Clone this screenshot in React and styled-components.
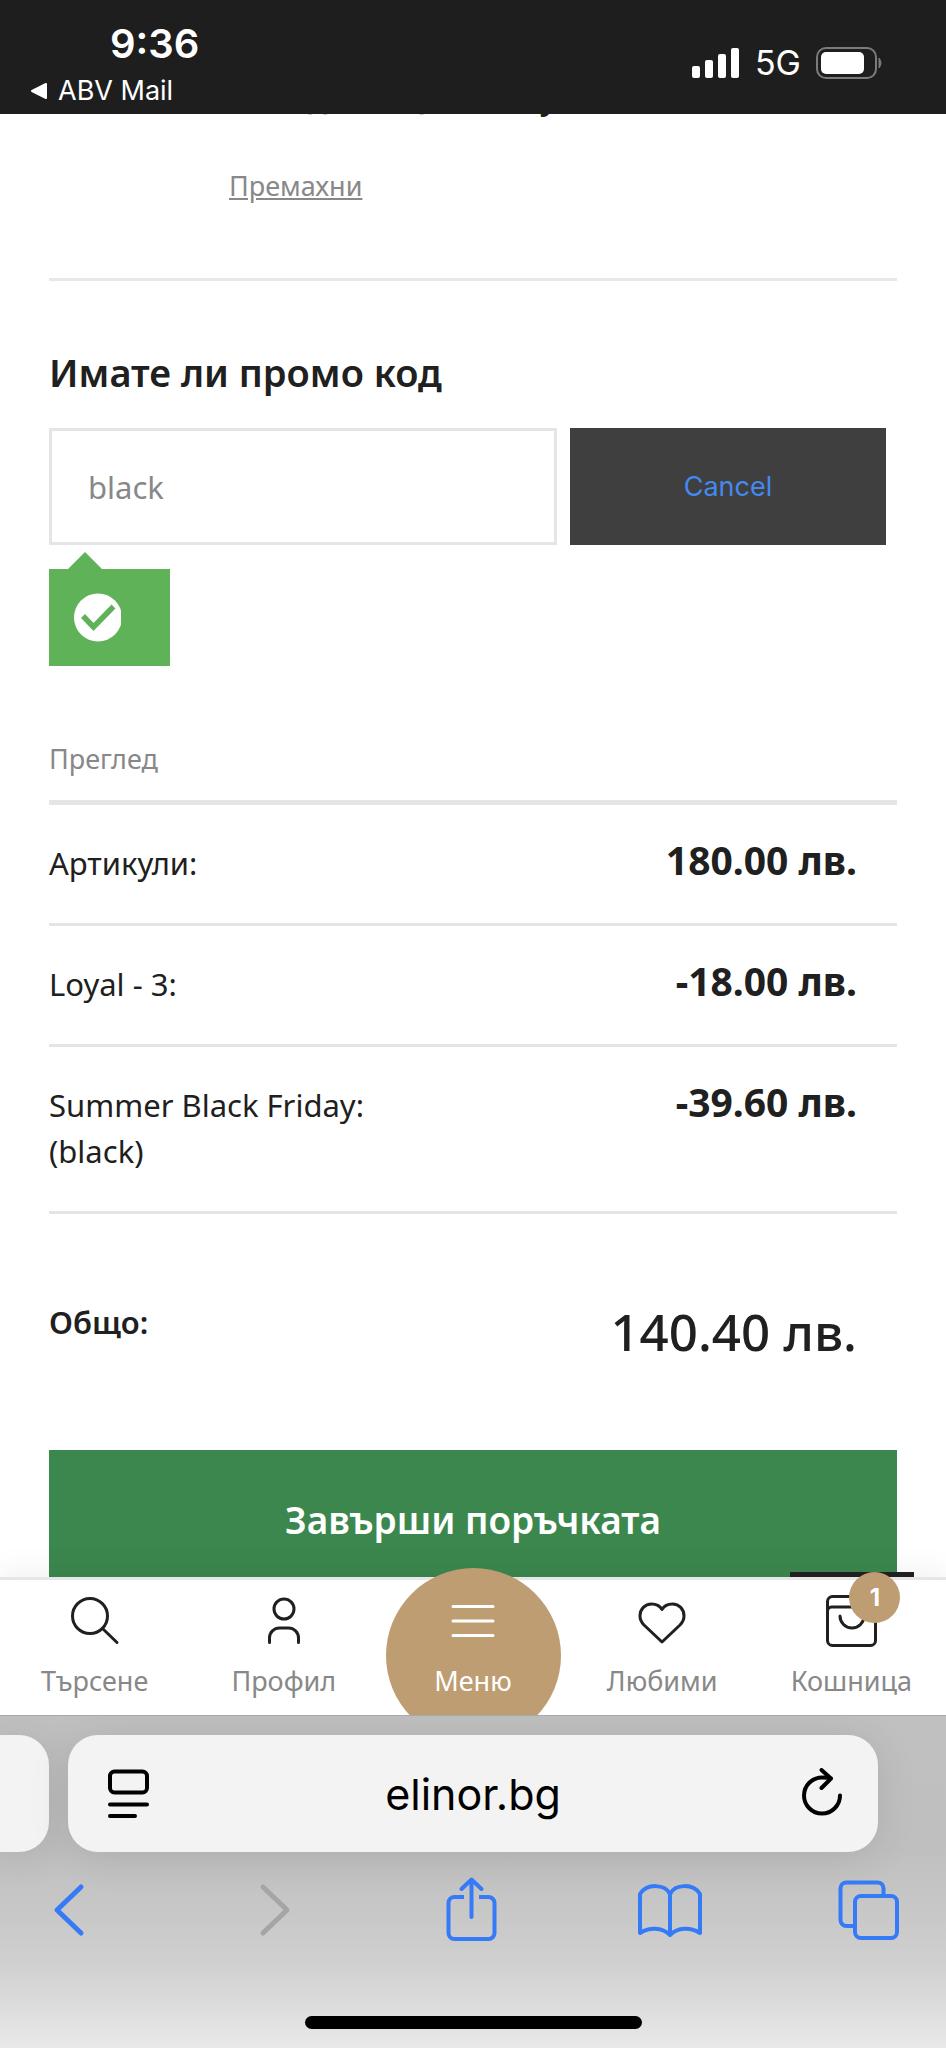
import React, { useState } from 'react';
import styled, { createGlobalStyle } from 'styled-components';

const summary = [
  { id: 1, label: 'Артикули:', amount: '180.00 лв.' },
  { id: 2, label: 'Loyal - 3:', amount: '-18.00 лв.' },
  { id: 3, label: 'Summer Black Friday: (black)', amount: '-39.60 лв.' },
];

function App() {
  const [promo, setPromo] = useState('black');

  return (
    <Page>
      <GlobalStyle />

      <StatusBar>
        <StatusLeft>
          <Time>9:36</Time>
          <BackToApp href="#">
            <svg width="18" height="18" viewBox="0 0 18 18">
              <path d="M2 9L16 2V16Z" fill="#fff" stroke="#fff" strokeWidth="2" strokeLinejoin="round" />
            </svg>
            ABV Mail
          </BackToApp>
        </StatusLeft>
        <StatusRight>
          <svg width="48" height="32" viewBox="0 0 48 32" fill="#fff">
            <rect x="0" y="19" width="8" height="12" rx="2" />
            <rect x="13" y="13" width="8" height="18" rx="2" />
            <rect x="26" y="7" width="8" height="24" rx="2" />
            <rect x="39" y="1" width="8" height="30" rx="2" />
          </svg>
          <Network>5G</Network>
          <svg width="68" height="34" viewBox="0 0 68 34">
            <rect x="1" y="2" width="59" height="30" rx="9" fill="none" stroke="#7b7b7b" strokeWidth="2" />
            <rect x="5" y="6" width="43" height="22" rx="5" fill="#fff" />
            <path d="M63 12q4 5 0 10z" fill="#7b7b7b" stroke="#7b7b7b" />
          </svg>
        </StatusRight>
      </StatusBar>

      <Main>
        <CartItem>
          {/* last line of the product name, scrolled under the status bar */}
          <NameTail>
            <span>д</span>
            <span>ц</span>
            <span>у</span>
          </NameTail>
          <RemoveLink href="#">Премахни</RemoveLink>
        </CartItem>

        <PromoLabel htmlFor="promo">Имате ли промо код</PromoLabel>
        <PromoForm onSubmit={(e) => e.preventDefault()}>
          <PromoInput id="promo" type="text" value={promo} onChange={(e) => setPromo(e.target.value)} />
          <CancelButton type="button" onClick={() => setPromo('')}>Cancel</CancelButton>
        </PromoForm>
        <PromoResult>
          <svg width="47" height="49" viewBox="0 0 47 49">
            <circle cx="24" cy="24.5" r="24" fill="#fff" />
            <path d="M9 23L19.500 34L39.500 13.500" fill="none" stroke="#60b258" strokeWidth="5.500" />
          </svg>
        </PromoResult>

        <SummaryTitle>Преглед</SummaryTitle>
        <Summary>
          {summary.map(row => (
            <Row key={row.id}>
              <Label>{row.label}</Label>
              <Amount>{row.amount}</Amount>
            </Row>
          ))}
          <TotalRow>
            <Label $bold>Общо:</Label>
            <Amount $total>140.40 лв.</Amount>
          </TotalRow>
        </Summary>

        <OrderButton type="button">Завърши поръчката</OrderButton>
      </Main>

      <TabBar>
        <HiddenTooltip />
        <Tab href="#">
          <TabIcon>
            <circle cx="21" cy="20" r="17.500" />
            <path d="M33.500 32.500L48 46.500" />
          </TabIcon>
          <TabText>Търсене</TabText>
        </Tab>
        <Tab href="#">
          <TabIcon>
            <circle cx="26" cy="13" r="10" />
            <path d="M11.500 46.500V42a10 10 0 0 1 10-10h9a10 10 0 0 1 10 10v4.500" />
          </TabIcon>
          <TabText>Профил</TabText>
        </Tab>
        <Tab href="#" $active>
          <TabIcon $active>
            <path d="M6 10.500H46M6 25H46M6 39.500H46" />
          </TabIcon>
          <TabText>Меню</TabText>
        </Tab>
        <Tab href="#">
          <TabIcon>
            <path d="M26 46L8 29C5.500 26.500 4 23.500 4 20C4 13 9 8 15.500 8C20 8 24 10 26 13.500C28 10 32 8 36.500 8C43 8 48 13 48 20C48 23.500 46.500 26.500 44 29Z" />
          </TabIcon>
          <TabText>Любими</TabText>
        </Tab>
        <Tab href="#">
          <TabIcon>
            <rect x="2.500" y="0.500" width="48" height="49" rx="5" />
            <path d="M2.500 15a4 4 0 0 1 4-4h40a4 4 0 0 1 4 4M15 20a12 12 0 0 0 24 0" />
          </TabIcon>
          <TabText>Кошница</TabText>
          <Badge>1</Badge>
        </Tab>
      </TabBar>

      <BrowserBar>
        <AddressRow>
          <PreviousTab />
          <Address>
            <IconButton type="button" aria-label="Изглед">
              <svg width="48" height="52" viewBox="0 0 48 52" fill="none" stroke="#000" strokeWidth="4" strokeLinecap="round">
                <rect x="6" y="3.500" width="37" height="21" rx="4.500" />
                <path d="M6 36.500H43M6 48H31" />
              </svg>
            </IconButton>
            <Url>elinor.bg</Url>
            <IconButton type="button" aria-label="Презареди">
              <svg width="48" height="52" viewBox="0 0 48 52" fill="none" stroke="#000" strokeWidth="4" strokeLinecap="round" strokeLinejoin="round">
                <path d="M46 27.500A18 18 0 1 1 28 9.500Q33 9.500 37 10.500M27.500 2L37 10.500L27.500 20" />
              </svg>
            </IconButton>
          </Address>
        </AddressRow>

        <Toolbar>
          <IconButton type="button" aria-label="Назад">
            <ToolIcon $thick><path d="M45 11L21 34L45 57" /></ToolIcon>
          </IconButton>
          <IconButton type="button" aria-label="Напред" disabled>
            <ToolIcon $thick $disabled><path d="M27 11L51 34L27 57" /></ToolIcon>
          </IconButton>
          <IconButton type="button" aria-label="Сподели">
            <ToolIcon>
              <path d="M27 21H17.500a6 6 0 0 0-6 6V57a6 6 0 0 0 6 6H51.500a6 6 0 0 0 6-6V27a6 6 0 0 0-6-6H42" strokeLinecap="butt" />
              <path d="M34.500 4V41M24.500 13L34.500 3.500L44.500 13" />
            </ToolIcon>
          </IconButton>
          <IconButton type="button" aria-label="Отметки">
            <ToolIcon>
              <path d="M33 18C28 8 10 7 3 18V57C12 51 25 51 33 59C41 51 54 51 63 57V18C56 7 38 8 33 18V59" />
            </ToolIcon>
          </IconButton>
          <IconButton type="button" aria-label="Раздели">
            <ToolIcon>
              <path d="M17 50H9.500a6 6 0 0 1-6-6V12.500a6 6 0 0 1 6-6h31a6 6 0 0 1 6 6V20" strokeLinecap="butt" />
              <rect x="18" y="20" width="42" height="42" rx="6" />
            </ToolIcon>
          </IconButton>
        </Toolbar>
        <HomeIndicator />
      </BrowserBar>
    </Page>
  );
}

export default App;


const GlobalStyle = createGlobalStyle`
  * {
    box-sizing: border-box;
  }
  body {
    margin: 0;
    background: #fff;
    color: #202020;
    font-family: "Noto Sans", sans-serif;
  }
  button {
    border: 0;
    padding: 0;
    background: none;
    font-family: inherit;
  }
  svg {
    display: block;
    flex-shrink: 0;
  }
`;

const Page = styled.div`
  display: flex;
  flex-direction: column;
  height: 100vh;
`;

/* status bar */
const StatusBar = styled.header`
  display: flex;
  justify-content: space-between;
  flex-shrink: 0;
  height: 114px;
  padding: 20px 62px 0 30px;
  background: #1e1e1e;
  color: #fff;
  font-family: Inter, sans-serif;
`;

const StatusLeft = styled.div`
  display: flex;
  flex-direction: column;
  gap: 6px;
`;

const Time = styled.div`
  padding-left: 80px;
  font-size: 40px;
  font-weight: 600;
  line-height: 48px;
`;

const BackToApp = styled.a`
  display: flex;
  align-items: center;
  gap: 10px;
  color: #fff;
  font-size: 27px;
  line-height: 34px;
  text-decoration: none;
`;

const StatusRight = styled.div`
  display: flex;
  align-items: center;
  gap: 15px;
  height: 86px;
`;

const Network = styled.span`
  font-size: 34px;
  line-height: 48px;
`;

/* cart */
const Main = styled.main`
  flex: 1;
  min-height: 0;
  overflow: hidden;
  padding: 0 49px;
`;

const CartItem = styled.div`
  padding-bottom: 74px;
  border-bottom: 3px solid #e8e8e8;
`;

const NameTail = styled.div`
  display: grid;
  grid-template-columns: 96px 136px 1fr;
  height: 6px;
  margin-bottom: 48px;
  padding-left: 259px;
  overflow: hidden;
  font-size: 31px;
  font-weight: 600;
  line-height: 44px;

  span {
    margin-top: -38px;
  }
`;

const RemoveLink = styled.a`
  display: inline-block;
  margin-left: 180px;
  color: #888;
  font-size: 27px;
  line-height: 36px;
  vertical-align: top;
`;

const PromoLabel = styled.label`
  display: block;
  margin: 65px 0 30px;
  font-size: 38px;
  font-weight: 600;
  line-height: 52px;
`;

const PromoForm = styled.form`
  display: grid;
  grid-template-columns: 508fr 316fr;
  gap: 13px;
  height: 117px;
  padding-right: 11px;
`;

const PromoInput = styled.input`
  min-width: 0;
  padding: 0 36px;
  border: 3px solid #e5e5e5;
  border-radius: 0;
  color: #888;
  font-family: inherit;
  font-size: 31px;
`;

const CancelButton = styled.button`
  background: #3f3f3f;
  color: #4489f0;
  font-family: Inter, sans-serif;
  font-size: 27px;
`;

const PromoResult = styled.div`
  position: relative;
  width: 121px;
  margin-top: 24px;
  padding: 24px 25px;
  background: #60b258;

  &::before {
    content: '';
    position: absolute;
    left: 19px;
    bottom: 100%;
    border: 17px solid transparent;
    border-top: 0;
    border-bottom-color: #60b258;
  }
`;

const SummaryTitle = styled.div`
  margin-top: 75px;
  padding-bottom: 23px;
  border-bottom: 5px solid #e5e5e5;
  color: #888;
  font-size: 27px;
  line-height: 36px;
`;

const Summary = styled.dl`
  margin: 0;
`;

const Row = styled.div`
  display: flex;
  align-items: baseline;
  justify-content: space-between;
  padding: 32px 40px 37px 0;
  border-bottom: 3px solid #e5e5e5;
`;

const TotalRow = styled.div`
  display: flex;
  align-items: flex-start;
  justify-content: space-between;
  padding: 85px 40px 87px 0;
`;

const Label = styled.dt`
  flex: 0 0 42%;
  font-size: 31px;
  font-weight: ${(p) => (p.$bold ? 600 : 400)};
  line-height: 46px;
`;

const Amount = styled.dd`
  margin: 0;
  font-size: ${(p) => (p.$total ? 51 : 39)}px;
  font-weight: ${(p) => (p.$total ? 500 : 700)};
  line-height: ${(p) => (p.$total ? 64 : 46)}px;
`;

const OrderButton = styled.button`
  width: 100%;
  height: 138px;
  background: #3c874e;
  color: #fff;
  font-size: 37px;
  font-weight: 600;
`;

/* shop navigation */
const TabBar = styled.nav`
  position: relative;
  display: grid;
  grid-template-columns: repeat(5, 1fr);
  flex-shrink: 0;
  border-top: 3px solid #e6e6e6;
  background: #fff;
  box-shadow: 0 -6px 30px rgba(0, 0, 0, 0.06);
`;

const HiddenTooltip = styled.div`
  position: absolute;
  right: 32px;
  bottom: 100%;
  width: 124px;
  height: 5px;
  margin-bottom: 3px;
  background: #202020;
`;

const Tab = styled.a`
  position: relative;
  display: flex;
  flex-direction: column;
  align-items: center;
  gap: 15px;
  padding: 16px 0;
  color: ${(p) => (p.$active ? '#fff' : '#888')};
  font-size: 27px;
  line-height: 36px;
  text-decoration: none;

  &::before {
    content: '';
    display: ${(p) => (p.$active ? 'block' : 'none')};
    position: absolute;
    top: -12px;
    left: calc(50% - 87px);
    width: 175px;
    height: 175px;
    border-radius: 50%;
    background: #be9d72;
  }
`;

const TabIcon = styled.svg.attrs({ viewBox: '0 0 52 52' })`
  position: relative;
  width: 52px;
  height: 52px;
  overflow: visible;
  fill: none;
  stroke: ${(p) => (p.$active ? '#fff' : '#202020')};
  stroke-width: 3;
  stroke-linecap: round;
  stroke-linejoin: round;
`;

const TabText = styled.span`
  position: relative;
`;

const Badge = styled.span`
  position: absolute;
  top: -8px;
  left: calc(50% - 2px);
  width: 51px;
  height: 51px;
  border-radius: 50%;
  background: #be9d72;
  color: #fff;
  font-family: Inter, sans-serif;
  font-size: 24px;
  font-weight: 700;
  line-height: 51px;
  text-align: center;
`;

/* browser controls */
const BrowserBar = styled.footer`
  position: relative;
  flex-shrink: 0;
  overflow: hidden;
  padding: 19px 0;
  border-top: 1px solid #a9a9a9;
  background: linear-gradient(#c0c0c0, #bfbfbf 40%, #c8c8c8 60%, #d0d0d0 75%, #e9e9e9);
`;

const AddressRow = styled.div`
  display: flex;
  gap: 19px;
  height: 117px;
  padding-right: 68px;
`;

const PreviousTab = styled.div`
  width: 49px;
  border-radius: 0 30px 30px 0;
  background: #f3f3f3;
  box-shadow: 0 4px 40px rgba(0, 0, 0, 0.1);
`;

const Address = styled.div`
  display: flex;
  flex: 1;
  align-items: center;
  justify-content: space-between;
  padding: 0 36px;
  border-radius: 30px;
  background: #f3f3f3;
  box-shadow: 0 4px 40px rgba(0, 0, 0, 0.1);
`;

const Url = styled.span`
  color: #000;
  font-family: Inter, sans-serif;
  font-size: 43px;
  line-height: 52px;
`;

const IconButton = styled.button`
  display: flex;
`;

const Toolbar = styled.div`
  display: flex;
  justify-content: space-between;
  margin: 24px 0 72px;
  padding: 0 45px 0 36px;
`;

const ToolIcon = styled.svg.attrs({ viewBox: '0 0 64 68' })`
  width: 64px;
  height: 68px;
  overflow: visible;
  fill: none;
  stroke: ${(p) => (p.$disabled ? '#a5a5a5' : '#357af6')};
  stroke-width: ${(p) => (p.$thick ? 5 : 4)};
  stroke-linecap: round;
  stroke-linejoin: round;
`;

const HomeIndicator = styled.div`
  width: 337px;
  height: 13px;
  margin: 0 auto;
  border-radius: 7px;
  background: #000;
`;
